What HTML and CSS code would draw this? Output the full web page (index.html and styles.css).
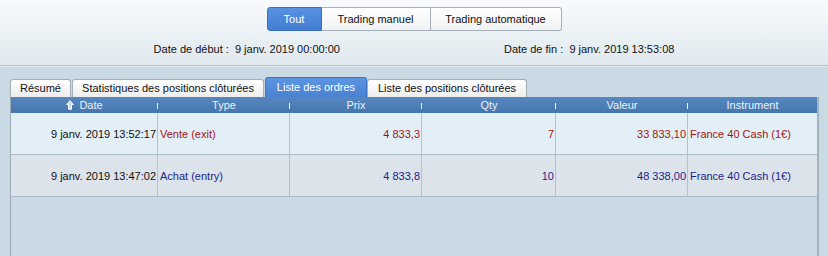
FILE: index.html
```html
<!DOCTYPE html>
<html lang="fr">
<head>
<meta charset="utf-8">
<link rel="stylesheet" href="styles.css">
</head>
<body>
<div class="top">
  <div class="seg">
    <div class="seg-btn active">Tout</div>
    <div class="seg-btn">Trading manuel</div>
    <div class="seg-btn">Trading automatique</div>
  </div>
  <div class="dates">
    <span>Date de début :&nbsp; 9 janv. 2019 00:00:00</span>
    <span>Date de fin :&nbsp; 9 janv. 2019 13:53:08</span>
  </div>
</div>
<div class="main">
  <div class="tabs">
    <div class="tab">Résumé</div>
    <div class="tab">Statistiques des positions clôturées</div>
    <div class="tab active">Liste des ordres</div>
    <div class="tab">Liste des positions clôturées</div>
  </div>
  <div class="grid">
    <div class="head">
      <div class="hc"><svg class="arrow" width="8" height="10" viewBox="0 0 8 10"><path d="M4 0.7 L7.3 4.5 H5.5 V9.3 H2.5 V4.5 H0.7 Z" fill="#c9d9ee" stroke="#ffffff" stroke-width="1"/></svg>Date<i class="tick"></i></div>
      <div class="hc">Type<i class="tick"></i></div>
      <div class="hc">Prix<i class="tick"></i></div>
      <div class="hc">Qty<i class="tick"></i></div>
      <div class="hc">Valeur<i class="tick"></i></div>
      <div class="hc">Instrument</div>
    </div>
    <div class="row r1 sell">
      <div class="c right dark">9 janv. 2019 13:52:17</div>
      <div class="c">Vente (exit)</div>
      <div class="c right">4 833,3</div>
      <div class="c right">7</div>
      <div class="c right">33 833,10</div>
      <div class="c last">France 40 Cash (1€)</div>
    </div>
    <div class="row r2 buy">
      <div class="c right dark">9 janv. 2019 13:47:02</div>
      <div class="c">Achat (entry)</div>
      <div class="c right">4 833,8</div>
      <div class="c right">10</div>
      <div class="c right">48 338,00</div>
      <div class="c last">France 40 Cash (1€)</div>
    </div>
  </div>
</div>
</body>
</html>
```

FILE: styles.css
```css
html, body {
  margin: 0;
  padding: 0;
}
body {
  width: 828px;
  height: 256px;
  overflow: hidden;
  background: #c9dae4;
  font-family: "Liberation Sans", Arial, sans-serif;
  font-size: 11px;
  color: #111;
}
.top {
  height: 66px;
  box-sizing: border-box;
  padding-top: 7px;
  background: linear-gradient(to bottom, #f8fafc 0%, #e9f0f4 60%, #dfe8ee 100%);
  border-bottom: 1px solid #b3c2cc;
  box-shadow: 0 1px 0 #e4edf2;
  display: flex;
  flex-direction: column;
  align-items: center;
}
.seg {
  display: flex;
  height: 24px;
}
.seg-btn {
  box-sizing: border-box;
  height: 24px;
  line-height: 22px;
  text-align: center;
  border: 1px solid #a7b0b8;
  border-left: none;
  background: linear-gradient(to bottom, #ffffff, #f1f2f3);
  color: #111;
}
.seg-btn:nth-child(1) { width: 55px; }
.seg-btn:nth-child(2) { width: 109px; }
.seg-btn:nth-child(3) { width: 131px; border-radius: 0 3px 3px 0; }
.seg-btn.active {
  border: 1px solid #3b6fc1;
  border-radius: 3px 0 0 3px;
  background: linear-gradient(to bottom, #5892e2, #437dd3);
  color: #fff;
}
.dates {
  display: flex;
  gap: 164px;
  margin-top: 11px;
  line-height: 14px;
}
.main {
  padding: 11px 0 0 10px;
}
.tabs {
  display: flex;
  align-items: flex-end;
  height: 20px;
}
.tab {
  box-sizing: border-box;
  height: 18px;
  line-height: 16px;
  padding: 0 9px;
  margin-right: 1px;
  border: 1px solid #a6adb4;
  border-bottom: none;
  border-radius: 3px 3px 0 0;
  background: linear-gradient(to bottom, #ffffff, #eeeeee);
  color: #111;
  text-align: center;
}
.tab:nth-child(1) { width: 61px; }
.tab:nth-child(2) { width: 192px; }
.tab:nth-child(3) { width: 102px; }
.tab:nth-child(4) { width: 160px; }
.tab.active {
  height: 20px;
  line-height: 18px;
  border-color: #3f74c4;
  background: linear-gradient(to bottom, #5c95e2, #4a82d2);
  color: #fff;
  margin-right: 0;
}
.grid {
  width: 809px;
  height: 160px;
  box-sizing: border-box;
  border-left: 1px solid #9aaab5;
  border-right: 2px solid #a3b2bc;
}
.head, .row {
  display: grid;
  grid-template-columns: 147px 132px 132px 134px 132px 129px;
}
.head {
  height: 16px;
  background: linear-gradient(to bottom, #5687c0, #4676ad);
  color: #eaf1f8;
}
.hc {
  position: relative;
  display: flex;
  align-items: center;
  justify-content: center;
  line-height: 16px;
}
.arrow {
  margin-right: 5px;
}
.tick {
  position: absolute;
  right: 0;
  top: 6px;
  width: 1px;
  height: 6px;
  background: #f0f4f8;
}
.row {
  height: 42px;
  border-bottom: 1px solid #aebcc6;
  box-sizing: border-box;
}
.r1 { background: #e2eff6; }
.r2 { background: #dce3ea; }
.c {
  display: flex;
  align-items: center;
  padding: 0 1px 0 2px;
  border-right: 1px solid #b3c1cb;
  white-space: nowrap;
}
.c.right {
  justify-content: flex-end;
}
.c.last {
  border-right: none;
}
.sell .c { color: #a31515; }
.buy .c { color: #1d1d8a; }
.row .c.dark { color: #111; }
```
